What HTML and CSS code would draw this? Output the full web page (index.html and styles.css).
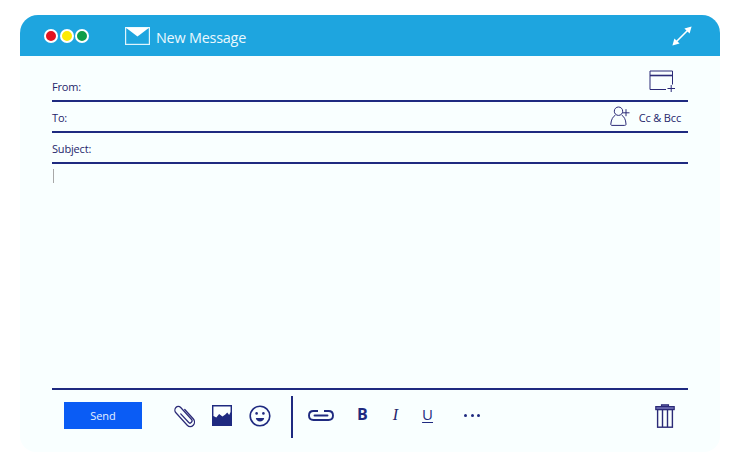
FILE: index.html
```html
<!DOCTYPE html>
<html lang="en">
<head>
<meta charset="utf-8">
<title>New Message</title>
<link rel="stylesheet" href="styles.css">
</head>
<body>
<main class="window">
  <header class="titlebar">
    <div class="lights"><span class="light red"></span><span class="light yellow"></span><span class="light green"></span></div>
    <svg class="mail" width="25" height="18" viewBox="0 0 25 18"><rect x="0.6" y="0.6" width="23.8" height="16.8" fill="#1ea5df" stroke="#dff4fc" stroke-width="1.2"/><path d="M0.6 0.6H24.4L12.5 9.6Z" fill="#fff"/></svg>
    <h1 class="title">New Message</h1>
    <svg class="expand" width="20" height="20" viewBox="0 0 20 20"><path d="M2.5 17.5L17.5 2.5" stroke="#fff" stroke-width="1.6"/><path d="M19.6 0.4L12.4 2.4L17.6 7.6Z M0.4 19.6L2.4 12.4L7.6 17.6Z" fill="#fff"/></svg>
  </header>
  <section class="fields">
    <div class="field from"><span class="label">From:</span>
      <svg class="tpl" width="28" height="22" viewBox="0 0 28 22"><path d="M23.5 14.5V1H1V19.5H17" fill="none" stroke="#2b2a77" stroke-width="1"/><path d="M1 5.5H23.5" stroke="#2b2a77" stroke-width="1.6"/><path d="M18.5 18.5H26M22.2 15V22" stroke="#2b2a77" stroke-width="1"/></svg>
    </div>
    <div class="field to"><span class="label">To:</span>
      <div class="cc">
        <svg class="person" width="20" height="20" viewBox="0 0 20 20"><circle cx="8.5" cy="5.2" r="4.2" fill="none" stroke="#2b2a77" stroke-width="1"/><path d="M5.5 9C3 10.5 1.2 13.5 0.8 18C0.7 19 1.2 19.4 2 19.4H14.6C15.6 19.4 16 19 16 18C15.8 13.5 14 10.5 11.6 9" fill="none" stroke="#2b2a77" stroke-width="1"/><path d="M12.5 6.8H19.5M16 3.2V10.2" stroke="#2b2a77" stroke-width="1"/></svg>
        <span class="label">Cc &amp; Bcc</span>
      </div>
    </div>
    <div class="field subject"><span class="label">Subject:</span></div>
  </section>
  <section class="editor"><span class="caret"></span></section>
  <footer class="toolbar">
    <button class="send">Send</button>
    <div class="tools">
      <svg class="clip" width="22" height="24" viewBox="0 0 24 24" preserveAspectRatio="none"><g transform="rotate(-45 12 12)"><path d="M11 8V20A2.2 2.2 0 0 0 15.4 20V3.5A3.7 3.7 0 0 0 8 3.5V21A4.6 4.6 0 0 0 17.2 21V8" fill="none" stroke="#2b2a77" stroke-width="1.4" stroke-linecap="round"/></g></svg>
      <svg class="pic" width="20" height="21" viewBox="0 0 21 21" preserveAspectRatio="none"><rect width="21" height="21" fill="#1f2a80"/><path d="M1.5 1.5H19.5V7L18 10L16 7.5L14 9.5L11 11.5L7.5 9L4.5 12.5L1.5 11Z" fill="#fbffff"/></svg>
      <svg class="smile" width="22" height="22" viewBox="0 0 22 22"><circle cx="11" cy="11" r="9.8" fill="none" stroke="#1f2a80" stroke-width="1.6"/><circle cx="7.6" cy="8.4" r="1.3" fill="#1f2a80"/><circle cx="14.4" cy="8.4" r="1.3" fill="#1f2a80"/><path d="M6.8 13H15.2C14.8 15.4 13.2 16.4 11 16.4C8.8 16.4 7.2 15.4 6.8 13Z" fill="#1f2a80"/></svg>
    </div>
    <span class="divider"></span>
    <div class="format">
      <svg class="link" width="26" height="11" viewBox="0 0 26 11"><path d="M10 1H5.5C2.8 1 1 2.8 1 5.5C1 8.2 2.8 10 5.5 10H20.5C23.2 10 25 8.2 25 5.5C25 2.8 23.2 1 20.5 1H16" fill="none" stroke="#1f2a80" stroke-width="1.9"/><path d="M6.5 5.5H19.5" stroke="#1f2a80" stroke-width="1.9" stroke-linecap="round"/></svg>
      <span class="bold">B</span>
      <span class="italic">I</span>
      <span class="under">U</span>
      <span class="dots"><i></i><i></i><i></i></span>
    </div>
    <svg class="trash" width="20" height="24" viewBox="0 0 20 24"><path d="M6.5 2.5V0.8H13.5V2.5" fill="#6f6fb5" stroke="#2b2a77" stroke-width="1.2"/><rect x="0.8" y="2.6" width="18.4" height="3" fill="#6f6fb5" stroke="#2b2a77" stroke-width="1.2"/><rect x="2.6" y="5.6" width="14.8" height="17.6" fill="#fbffff" stroke="#2b2a77" stroke-width="1.4"/><path d="M7.5 5.6V23M12.5 5.6V23" stroke="#2b2a77" stroke-width="1.4"/></svg>
  </footer>
</main>
</body>
</html>
```

FILE: styles.css
```css
* { box-sizing: border-box; }
html, body { margin: 0; background: #fff; }
body { width: 740px; height: 468px; padding: 15px 20px 0; font-family: "Open Sans", "Noto Sans", sans-serif; color: #25256b; }
.window { width: 700px; height: 437px; background: #f9ffff; border-radius: 18px 18px 16px 16px; display: flex; flex-direction: column; }
.titlebar { height: 41px; flex: none; background: #1ea5df; border-radius: 18px 18px 0 0; display: flex; align-items: center; padding: 0 28px 0 24px; }
.lights { display: flex; gap: 1.5px; }
.light { width: 14px; height: 14px; border-radius: 50%; border: 2px solid #fff; }
.red { background: #e4131f; }
.yellow { background: #fdeb06; }
.green { background: #0f9d48; }
.mail { margin-left: 36px; margin-top: 0; }
.title { margin: 3px 0 0 6px; font-size: 14.4px; font-weight: 400; color: #eaf8fe; letter-spacing: -0.22px; flex: 1; }
.expand { margin-top: 1px; }
.fields { margin: 0 32px; flex: none; }
.field { display: flex; align-items: center; justify-content: space-between; height: 31px; border-bottom: 2px solid #1f2a80; padding-top: 1px; }
.from { height: 46px; padding-top: 16px; }
.label { font-size: 11px; letter-spacing: -0.17px; color: #25256b; }
.tpl { margin-right: 11px; margin-top: -10px; }
.cc { display: flex; align-items: center; gap: 9px; padding-right: 7px; }
.cc .label { margin-top: 1px; }
.person { margin-left: 1px; margin-top: -3px; }
.editor { flex: 1; padding: 5px 32px 0 33px; min-height: 0; }
.caret { display: block; width: 1px; height: 14px; background: #a8a8a8; }
.toolbar { flex: none; height: 64px; margin: 0 32px; border-top: 2px solid #1f2a80; display: flex; align-items: center; padding: 0 13px 11px 12px; }
.send { width: 78px; height: 27px; margin-top: -1px; border: 0; padding: 0; background: #0a5cf5; color: #e6f0ff; font: 400 11px "Open Sans", "Noto Sans", sans-serif; }
.tools { display: flex; align-items: center; gap: 17px; margin-left: 31px; }
.divider { width: 2px; height: 42px; background: #1f2a80; margin: 3px 0 0 20px; }
.format { display: flex; align-items: center; margin-left: 15px; flex: 1; }
.link { margin-top: -1px; }
.bold { font: 700 16px "Open Sans", sans-serif; color: #1f2a80; margin-left: 23px; margin-top: -4px; }
.italic { font: italic 400 16px "Liberation Serif", serif; color: #25256b; margin-left: 25px; margin-top: -2px; }
.under { font: 400 15px "Open Sans", sans-serif; color: #1f2a80; margin-left: 24px; margin-top: -3px; text-decoration: underline; text-underline-offset: 2px; text-decoration-thickness: 1px; }
.dots { display: flex; gap: 3.5px; margin-left: 31px; }
.dots i { width: 3px; height: 3px; border-radius: 50%; background: #1f2a80; }
```
